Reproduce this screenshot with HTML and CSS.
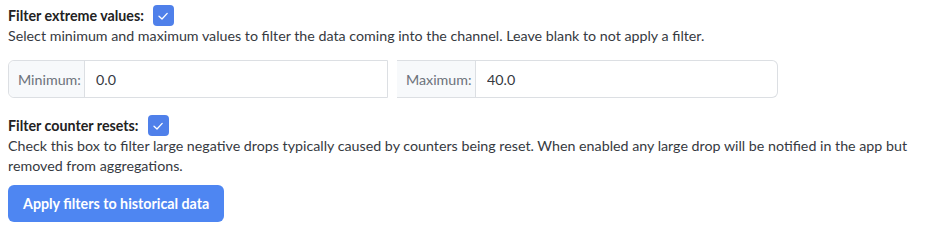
FILE: index.html
```html
<!DOCTYPE html>
<html lang="en">
<head>
    <meta charset="UTF-8">
    <title>Channel filters</title>
    <link rel="stylesheet" href="styles.css">
</head>
<body>
    <div class="filters">
        <div class="field">
            <div class="field-title">
                <span>Filter extreme values:</span>
                <span class="check">
                    <svg viewBox="0 0 16 16"><path d="M4 8.2 L7 11 L12.2 5.4" fill="none" stroke="white" stroke-width="1.3" stroke-linecap="round" stroke-linejoin="round"/></svg>
                </span>
            </div>
            <p class="help">Select minimum and maximum values to filter the data coming into the channel. Leave blank to not apply a filter.</p>
        </div>

        <div class="range">
            <div class="input-group first">
                <span class="addon">Minimum:</span>
                <input class="value" type="text" value="0.0">
            </div>
            <div class="input-group last">
                <span class="addon">Maximum:</span>
                <input class="value" type="text" value="40.0">
            </div>
        </div>

        <div class="field">
            <div class="field-title">
                <span>Filter counter resets:</span>
                <span class="check">
                    <svg viewBox="0 0 16 16"><path d="M4 8.2 L7 11 L12.2 5.4" fill="none" stroke="white" stroke-width="1.3" stroke-linecap="round" stroke-linejoin="round"/></svg>
                </span>
            </div>
            <p class="help">Check this box to filter large negative drops typically caused by counters being reset. When enabled any large drop will be notified in the app but removed from aggregations.</p>
        </div>

        <button class="apply">Apply filters to historical data</button>
    </div>
</body>
</html>
```

FILE: styles.css
```css
body {
    margin: 0;
    font-family: Lato, "Noto Sans", sans-serif;
    font-size: 14.25px;
    color: #363a3f;
    background: #fff;
}
.filters {
    padding: 5px 8px;
    width: 928px;
    box-sizing: border-box;
}
.field-title {
    display: flex;
    align-items: center;
    gap: 9px;
    font-weight: bold;
    color: #222;
    line-height: 21px;
}
.check {
    width: 21px;
    height: 21px;
    border-radius: 4px;
    background-color: #4f80ea;
    display: flex;
    align-items: center;
    justify-content: center;
}
.check svg {
    width: 16px;
    height: 16px;
}
.help {
    margin: 0;
    line-height: 20px;
}
.range {
    display: flex;
    gap: 9px;
    margin: 14px 0 17px;
}
.input-group {
    display: flex;
    width: 380px;
    height: 38px;
    box-sizing: border-box;
    border: 1px solid #dcdfe3;
}
.input-group.first {
    border-radius: 6px 0 0 6px;
}
.input-group.last {
    width: 381px;
    border-left: none;
    border-radius: 0 6px 6px 0;
}
.addon {
    display: flex;
    align-items: center;
    padding: 0 6px 0 9px;
    width: 76px;
    box-sizing: border-box;
    background-color: #f7f9fb;
    border-right: 1px solid #dcdfe3;
    color: #6c727a;
}
.last .addon {
    width: 79px;
}
.first .addon {
    border-radius: 6px 0 0 6px;
}
.value {
    flex: 1;
    border: none;
    outline: none;
    padding: 0 11px;
    font: inherit;
    color: #363a3f;
    background: transparent;
}
.apply {
    margin-top: 9px;
    height: 37px;
    padding: 0 15px;
    border: none;
    border-radius: 6px;
    background-color: #4e86f2;
    color: #fff;
    font: inherit;
    font-weight: bold;
    cursor: pointer;
}
```
